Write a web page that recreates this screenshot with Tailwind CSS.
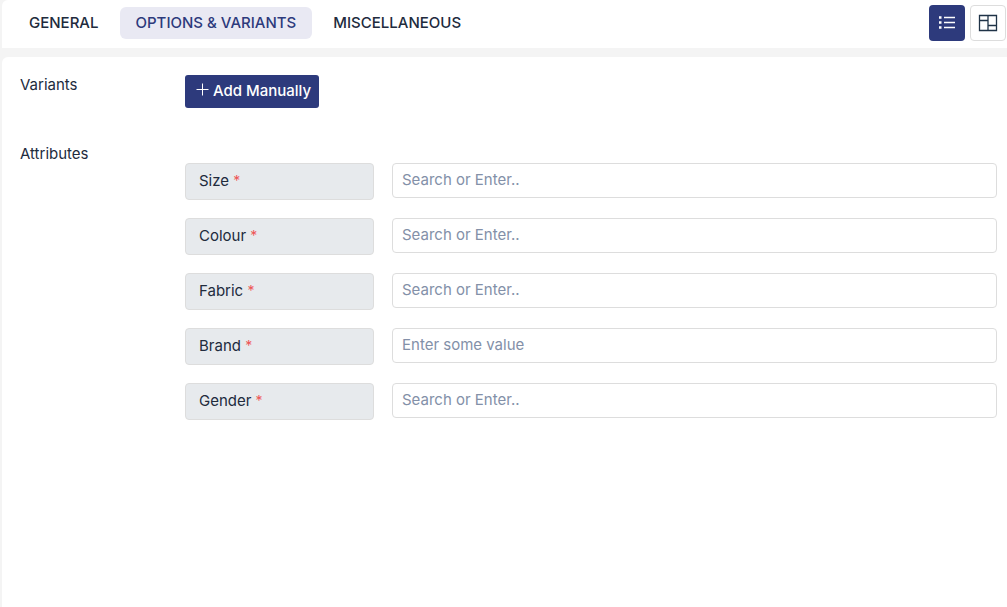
<!DOCTYPE html>
<html lang="en">
<head>
    <meta charset="UTF-8">
    <meta name="viewport" content="width=device-width, initial-scale=1.0">
    <title>Options &amp; Variants</title>
    <script src="https://cdn.jsdelivr.net/npm/@tailwindcss/browser@4"></script>
</head>
<body class="bg-[#f4f4f4] min-h-screen pl-0.5 flex flex-col gap-[9px] font-['Inter',sans-serif] text-[15px] leading-5 text-[#212b3d]">
    <!-- Tabs -->
    <header class="bg-white h-12 flex items-start justify-between pl-[11px] rounded-tl-md">
        <nav class="flex gap-[5px] pt-[7px] font-medium">
            <a href="#general" class="px-4 py-1.5 rounded-md">GENERAL</a>
            <a href="#options" class="px-4 py-1.5 rounded-md bg-[#e9e9f3] text-[#2d3a7c]">OPTIONS &amp; VARIANTS</a>
            <a href="#misc" class="px-4 py-1.5 rounded-md">MISCELLANEOUS</a>
        </nav>
        <div class="flex gap-[5px] pt-[5px] pr-px">
            <button type="button" aria-label="List view" class="size-9 flex items-center justify-center rounded bg-[#2d3a7c] text-white">
                <svg class="size-5" viewBox="0 0 20 20" fill="none" stroke="currentColor">
                    <path d="M7 4.500h11M7 9.500h11M7 14.500h11" stroke-width="1.700"/>
                    <path d="M2 4.500h2.500M2 9.500h2.500M2 14.500h2.500" stroke-width="2.500"/>
                </svg>
            </button>
            <button type="button" aria-label="Board view" class="size-9 flex items-center justify-center rounded bg-white border border-[#dddddd] text-[#1f3347]">
                <svg class="size-5" viewBox="0 0 20 20" fill="none" stroke="currentColor" stroke-width="1.3">
                    <path d="M1.500 2.500h17v15h-17zM10 2.500v15M1.500 7.500H10M10 12.500h8.500"/>
                </svg>
            </button>
        </div>
    </header>

    <main class="bg-white flex-1 rounded-tl-md pt-[18px] pl-[18px] pr-2.5">
        <section class="flex">
            <h2 class="w-[165px] shrink-0">Variants</h2>
            <button type="button" class="h-[33px] pl-2.5 pr-2 pb-px flex items-center gap-1 rounded-[3px] bg-[#2d3a7c] text-white font-medium">
                <svg class="size-3.5 mb-0.5" viewBox="0 0 14 14" fill="none" stroke="currentColor"><path d="M7.500 .5v12M1.500 6.500h12"/></svg>
                Add Manually
            </button>
        </section>

        <!-- Attributes -->
        <section class="flex pt-9">
            <h2 class="w-[165px] shrink-0">Attributes</h2>
            <div class="flex-1 pt-[19px] flex flex-col gap-[18px]">
                <div class="flex gap-[18px]">
                    <label for="size" class="w-[189px] h-[37px] shrink-0 px-[13px] pt-[7px] rounded bg-[#e7eaed] border border-[#dddddd]">Size <span class="text-sm text-[#ee5555]">*</span></label>
                    <input id="size" type="text" placeholder="Search or Enter.." class="flex-1 min-w-0 h-[35px] px-[9px] pb-0.5 rounded border border-[#dddddd] placeholder:text-[#8390a8]">
                </div>
                <div class="flex gap-[18px]">
                    <label for="colour" class="w-[189px] h-[37px] shrink-0 px-[13px] pt-[7px] rounded bg-[#e7eaed] border border-[#dddddd]">Colour <span class="text-sm text-[#ee5555]">*</span></label>
                    <input id="colour" type="text" placeholder="Search or Enter.." class="flex-1 min-w-0 h-[35px] px-[9px] pb-0.5 rounded border border-[#dddddd] placeholder:text-[#8390a8]">
                </div>
                <div class="flex gap-[18px]">
                    <label for="fabric" class="w-[189px] h-[37px] shrink-0 px-[13px] pt-[7px] rounded bg-[#e7eaed] border border-[#dddddd]">Fabric <span class="text-sm text-[#ee5555]">*</span></label>
                    <input id="fabric" type="text" placeholder="Search or Enter.." class="flex-1 min-w-0 h-[35px] px-[9px] pb-0.5 rounded border border-[#dddddd] placeholder:text-[#8390a8]">
                </div>
                <div class="flex gap-[18px]">
                    <label for="brand" class="w-[189px] h-[37px] shrink-0 px-[13px] pt-[7px] rounded bg-[#e7eaed] border border-[#dddddd]">Brand <span class="text-sm text-[#ee5555]">*</span></label>
                    <input id="brand" type="text" placeholder="Enter some value" class="flex-1 min-w-0 h-[35px] px-[9px] pb-0.5 rounded border border-[#dddddd] placeholder:text-[#8390a8]">
                </div>
                <div class="flex gap-[18px]">
                    <label for="gender" class="w-[189px] h-[37px] shrink-0 px-[13px] pt-[7px] rounded bg-[#e7eaed] border border-[#dddddd]">Gender <span class="text-sm text-[#ee5555]">*</span></label>
                    <input id="gender" type="text" placeholder="Search or Enter.." class="flex-1 min-w-0 h-[35px] px-[9px] pb-0.5 rounded border border-[#dddddd] placeholder:text-[#8390a8]">
                </div>
            </div>
        </section>
    </main>
</body>
</html>
